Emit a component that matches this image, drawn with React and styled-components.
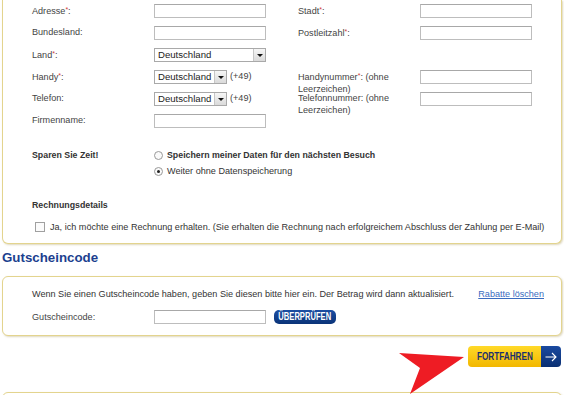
import React from 'react'
import styled, { createGlobalStyle } from 'styled-components'

const GlobalStyle = createGlobalStyle`
  html, body {
    margin: 0;
    padding: 0;
    background: #ffffff;
  }
  body {
    font-family: "Liberation Sans", Arial, sans-serif;
    font-size: 9.1px;
    color: #333333;
    overflow: hidden;
  }
`

const Page = styled.div`
  position: relative;
  width: 564px;
  height: 395px;
  overflow: hidden;
`

const Panel = styled.section`
  margin: 0 2px;
  border: 1px solid #e3d48e;
  border-radius: 6px;
  box-shadow: 1px 1px 2px rgba(160, 140, 70, 0.35);
  background: #fff;
  padding: ${(p) => p.$pad || '0'};
  ${(p) => p.$open && `
    border-top: 0;
    border-top-left-radius: 0;
    border-top-right-radius: 0;
  `}
`

const FormGrid = styled.div`
  display: grid;
  grid-template-columns: 122px 144px 122px 112px;
  grid-auto-rows: 22px;
`

const Label = styled.div`
  line-height: 12px;
  color: #444;
`

const Star = styled.span`
  color: #d23a3a;
  font-size: 7px;
  vertical-align: 2px;
`

const Field = styled.div`
  display: flex;
  align-items: flex-start;
  gap: 3px;
`

const TextInput = styled.input`
  box-sizing: border-box;
  width: ${(p) => p.$w || 112}px;
  height: 14px;
  margin: 0;
  padding: 0 2px;
  border: 1px solid #bdbdbd;
  border-top-color: #a8a8a8;
  background: #fff;
  font: inherit;
`

const SelectBox = styled.div`
  box-sizing: border-box;
  display: flex;
  width: ${(p) => p.$w}px;
  height: 14px;
  border: 1px solid #a9a9a9;
  background: #fff;
  font-size: 9.6px;
  line-height: 12px;
  color: #222;
`

const SelectText = styled.span`
  flex: 1;
  padding-left: 3px;
  white-space: nowrap;
  overflow: hidden;
`

const SelectArrow = styled.span`
  width: 11px;
  background: linear-gradient(#f6f6f6, #dadada);
  border-left: 1px solid #c6c6c6;
  display: flex;
  align-items: center;
  justify-content: center;
  &::after {
    content: '';
    border-left: 3px solid transparent;
    border-right: 3px solid transparent;
    border-top: 3px solid #111;
  }
`

const Prefix = styled.span`
  line-height: 13px;
  color: #444;
`

const OptionGrid = styled.div`
  display: grid;
  grid-template-columns: 122px 1fr;
  margin-top: 11px;
  line-height: 16px;
`

const Strong = styled.div`
  font-weight: bold;
  font-size: 8.8px;
  color: #333;
`

const Options = styled.div`
  display: flex;
  flex-direction: column;
`

const RadioRow = styled.label`
  display: flex;
  align-items: center;
  gap: 4px;
  font-weight: ${(p) => (p.$bold ? 'bold' : 'normal')};
  font-size: ${(p) => (p.$bold ? '8.8px' : 'inherit')};
  color: #333;
`

const Radio = styled.span`
  box-sizing: border-box;
  width: 9px;
  height: 9px;
  border-radius: 50%;
  border: 1px solid #9a9a9a;
  background: #fafafa;
  display: flex;
  align-items: center;
  justify-content: center;
  &::after {
    content: '';
    display: ${(p) => (p.$checked ? 'block' : 'none')};
    width: 3px;
    height: 3px;
    border-radius: 50%;
    background: #222;
  }
`

const SectionTitle = styled(Strong)`
  margin-top: 18px;
  line-height: 16px;
`

const CheckRow = styled.label`
  display: flex;
  align-items: center;
  gap: 5px;
  margin-top: 6px;
  margin-left: 3px;
  line-height: 16px;
  white-space: nowrap;
  color: #333;
`

const Checkbox = styled.span`
  box-sizing: border-box;
  width: 10px;
  height: 10px;
  border: 1px solid #a0a0a0;
  background: #fbfbfb;
`

const Heading = styled.h2`
  margin: 6px 0 10px 2px;
  font-size: 13.3px;
  line-height: 16px;
  font-weight: bold;
  color: #1c3f8f;
`

const InfoRow = styled.div`
  display: flex;
  justify-content: space-between;
  line-height: 16px;
  padding-right: 17px;
  white-space: nowrap;
`

const Link = styled.a`
  color: #3a6cc0;
  text-decoration: underline;
`

const CodeRow = styled.div`
  display: grid;
  grid-template-columns: 122px 120px auto;
  align-items: center;
  margin-top: 8px;
`

const Squeezed = styled.span`
  display: inline-block;
  transform: scaleX(${(p) => p.$x});
  white-space: nowrap;
`

const SmallButton = styled.button`
  justify-self: start;
  width: 62px;
  height: 14px;
  padding: 0;
  border: 0;
  border-radius: 5px;
  background: linear-gradient(#1c4fa3, #0a3378);
  color: #fff;
  font-family: "Liberation Sans", sans-serif;
  font-weight: bold;
  font-size: 10px;
  line-height: 14px;
  display: flex;
  justify-content: center;
`

const ActionRow = styled.div`
  display: flex;
  justify-content: flex-end;
  margin: 10px 3px 0 0;
`

const Continue = styled.button`
  display: flex;
  height: 21px;
  padding: 0;
  border: 0;
  border-radius: 4px;
  overflow: hidden;
  background: none;
`

const ContinueLabel = styled.span`
  width: 73px;
  background: linear-gradient(#ffd928, #f2b700);
  color: #1b2f6e;
  font-family: "Liberation Sans", sans-serif;
  font-weight: bold;
  font-size: 10.5px;
  line-height: 21px;
  display: flex;
  justify-content: center;
`

const ContinueArrow = styled.span`
  width: 20px;
  background: linear-gradient(#1a4aa0, #0a2f72);
  display: flex;
  align-items: center;
  justify-content: center;
`

const Pointer = styled.svg`
  position: absolute;
  left: 398px;
  top: 351px;
`

const BottomPanel = styled(Panel)`
  margin-top: 25px;
  height: 40px;
`

const Req = ({ children }) => (
  <Label>
    {children}
    <Star>*</Star>:
  </Label>
)

const Select = ({ w }) => (
  <SelectBox $w={w}>
    <SelectText>Deutschland</SelectText>
    <SelectArrow />
  </SelectBox>
)

const App = () => {
  return (
    <>
      <GlobalStyle />
      <Page>
        <Panel $open $pad="4px 0 8px 29px">
          <FormGrid>
            <Req>Adresse</Req>
            <Field><TextInput /></Field>
            <Req>Stadt</Req>
            <Field><TextInput /></Field>

            <Label>Bundesland:</Label>
            <Field><TextInput /></Field>
            <Req>Postleitzahl</Req>
            <Field><TextInput /></Field>

            <Req>Land</Req>
            <Field><Select w={112} /></Field>
            <div />
            <div />

            <Req>Handy</Req>
            <Field><Select w={73} /><Prefix>(+49)</Prefix></Field>
            <Label>Handynummer<Star>*</Star>: (ohne<br />Leerzeichen)</Label>
            <Field><TextInput /></Field>

            <Label>Telefon:</Label>
            <Field><Select w={73} /><Prefix>(+49)</Prefix></Field>
            <Label>Telefonnummer: (ohne<br />Leerzeichen)</Label>
            <Field><TextInput /></Field>

            <Label>Firmenname:</Label>
            <Field><TextInput /></Field>
          </FormGrid>

          <OptionGrid>
            <Strong>Sparen Sie Zeit!</Strong>
            <Options>
              <RadioRow $bold><Radio />Speichern meiner Daten für den nächsten Besuch</RadioRow>
              <RadioRow><Radio $checked />Weiter ohne Datenspeicherung</RadioRow>
            </Options>
          </OptionGrid>

          <SectionTitle>Rechnungsdetails</SectionTitle>
          <CheckRow>
            <Checkbox />
            Ja, ich möchte eine Rechnung erhalten. (Sie erhalten die Rechnung nach erfolgreichem Abschluss der Zahlung per E-Mail)
          </CheckRow>
        </Panel>

        <Heading>Gutscheincode</Heading>

        <Panel $pad="9px 0 11px 29px">
          <InfoRow>
            <span>Wenn Sie einen Gutscheincode haben, geben Sie diesen bitte hier ein. Der Betrag wird dann aktualisiert.</span>
            <Link href="#">Rabatte löschen</Link>
          </InfoRow>
          <CodeRow>
            <Label>Gutscheincode:</Label>
            <TextInput />
            <SmallButton><Squeezed $x={0.76}>ÜBERPRÜFEN</Squeezed></SmallButton>
          </CodeRow>
        </Panel>

        <ActionRow>
          <Continue>
            <ContinueLabel><Squeezed $x={0.78}>FORTFAHREN</Squeezed></ContinueLabel>
            <ContinueArrow>
              <svg width="12" height="10" viewBox="0 0 12 10">
                <path d="M0.5 5h10.5M7 1l4 4-4 4" fill="none" stroke="#fff" strokeWidth="1.1" />
              </svg>
            </ContinueArrow>
          </Continue>
        </ActionRow>

        <BottomPanel />

        <Pointer width="70" height="46" viewBox="0 0 70 46">
          <polygon points="1,2 66,6 12,43 22,17" fill="#ee1c24" />
        </Pointer>
      </Page>
    </>
  )
}

export default App
